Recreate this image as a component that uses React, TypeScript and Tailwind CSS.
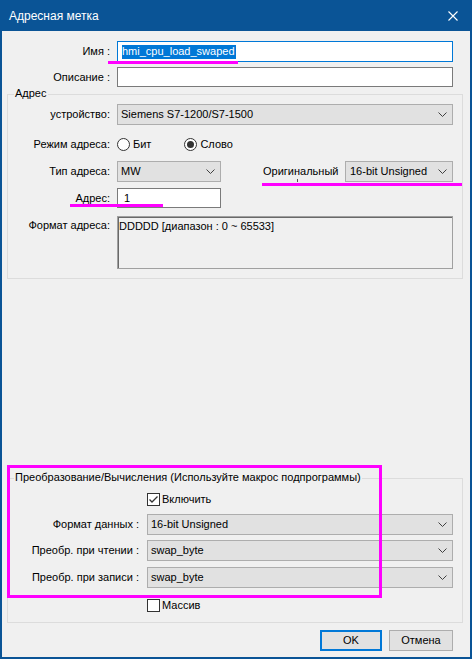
import React from 'react'

const Chevron: React.FC = () => (
    <svg width="9" height="5" viewBox="0 0 9 5" className="shrink-0"><polyline points="0.5,0.5 4.5,4.5 8.5,0.5" fill="none" stroke="#404040" strokeWidth="1" /></svg>
)

const Select: React.FC<{ value: string; w: string; pl?: string }> = ({ value, w, pl = 'pl-[3px]' }) => (
    <div className={`${w} h-[21px] flex items-center justify-between bg-[#e1e1e1] border border-[#adadad] ${pl} pr-[5px]`}>
        <span>{value}</span>
        <Chevron />
    </div>
)

const Radio: React.FC<{ checked?: boolean }> = ({ checked }) => (
    <div className="w-[13px] h-[13px] rounded-full border border-[#333] bg-white flex items-center justify-center shrink-0">
        {checked && <div className="w-[7px] h-[7px] rounded-full bg-[#333]" />}
    </div>
)

const Check: React.FC<{ checked?: boolean }> = ({ checked }) => (
    <div className="w-[13px] h-[13px] border border-[#333] bg-white flex items-center justify-center shrink-0">
        {checked && <svg width="11" height="11" viewBox="0 0 11 11"><polyline points="1.5,5.5 4,8 9.5,2.5" fill="none" stroke="#333" strokeWidth="1.3" /></svg>}
    </div>
)

const App: React.FC = () => {
    const lbl = "text-right shrink-0"
    return (
        <div className="w-[472px] h-[659px] bg-[#f0f0f0] border-x-2 border-b-2 border-[#0a5496] relative flex flex-col text-[11px] text-black leading-none font-['Liberation_Sans',Arial,sans-serif]">
            {/* title bar */}
            <div className="h-[31px] shrink-0 bg-[#0a5496] flex items-center justify-between pl-[7px] pr-[12px] text-white text-[12px]">
                <span>Адресная метка</span>
                <svg width="10" height="10" viewBox="0 0 10 10"><path d="M0.5 0.5 L9.5 9.5 M9.5 0.5 L0.5 9.5" stroke="#fff" strokeWidth="1.1" /></svg>
            </div>

            <div className="flex items-center mt-[10px]">
                <span className={`${lbl} w-[108px]`}>Имя :</span>
                <div className="ml-[7px] w-[336px] h-[21px] bg-white border border-[#0078d7] flex items-center pl-[4px]">
                    <span className="bg-[#0078d7] text-white h-[14px] flex items-center pr-[1px]">hmi_cpu_load_swaped</span>
                </div>
            </div>
            <div className="flex items-center mt-[5px]">
                <span className={`${lbl} w-[108px]`}>Описание :</span>
                <div className="ml-[7px] w-[336px] h-[20px] bg-white border border-[#7a7a7a]" />
            </div>

            {/* Адрес group */}
            <div className="relative mt-[7px] ml-[5px] w-[456px] border border-[#dcdcdc] pt-[9px] pb-[9px]">
                <span className="absolute -top-[7px] left-[6px] px-[1px] bg-[#f0f0f0]">Адрес</span>
                <div className="flex items-center">
                    <span className={`${lbl} w-[102px]`}>устройство:</span>
                    <div className="ml-[7px]"><Select value="Siemens S7-1200/S7-1500" w="w-[336px]" /></div>
                </div>
                <div className="flex items-center mt-[9px] h-[20px]">
                    <span className={`${lbl} w-[102px]`}>Режим адреса:</span>
                    <div className="ml-[7px] flex items-center gap-[3px]"><Radio /><span>Бит</span></div>
                    <div className="ml-[33px] flex items-center gap-[3px]"><Radio checked /><span>Слово</span></div>
                </div>
                <div className="flex items-center mt-[7px]">
                    <span className={`${lbl} w-[102px]`}>Тип адреса:</span>
                    <div className="ml-[7px]"><Select value="MW" w="w-[104px]" /></div>
                    <span className="ml-[42px] w-[82px]">Оригинальный</span>
                    <Select value="16-bit Unsigned" w="w-[108px]" pl="pl-[4px]" />
                </div>
                <div className="flex items-center mt-[6px]">
                    <span className={`${lbl} w-[102px]`}>Адрес:</span>
                    <div className="ml-[7px] w-[104px] h-[20px] bg-white border border-[#7a7a7a] flex items-center pl-[6px]">1</div>
                </div>
                <div className="flex items-start mt-[8px]">
                    <span className={`${lbl} w-[102px] pt-[4px]`}>Формат адреса:</span>
                    <div className="ml-[7px] w-[336px] h-[53px] border border-[#a0a0a0] shadow-[inset_1px_1px_0_#696969] pl-[1px] pt-[4px]">DDDDD [диапазон : 0 ~ 65533]</div>
                </div>
            </div>

            {/* conversion group */}
            <div className="relative mt-[199px] ml-[5px] w-[456px] border border-[#dcdcdc] pt-[12px] pb-[9px]">
                <span className="absolute -top-[7px] left-[6px] px-[1px] bg-[#f0f0f0]">Преобразование/Вычисления (Используйте макрос подпрограммы)</span>
                <div className="flex items-center h-[16px] pl-[139px] gap-[2px]"><Check checked /><span>Включить</span></div>
                <div className="flex items-center mt-[7px]">
                    <span className={`${lbl} w-[131px]`}>Формат данных :</span>
                    <div className="ml-[8px]"><Select value="16-bit Unsigned" w="w-[306px]" /></div>
                </div>
                <div className="flex items-center mt-[5px]">
                    <span className={`${lbl} w-[131px]`}>Преобр. при чтении :</span>
                    <div className="ml-[8px]"><Select value="swap_byte" w="w-[306px]" /></div>
                </div>
                <div className="flex items-center mt-[6px]">
                    <span className={`${lbl} w-[131px]`}>Преобр. при записи :</span>
                    <div className="ml-[8px]"><Select value="swap_byte" w="w-[306px]" /></div>
                </div>
                <div className="flex items-center h-[16px] mt-[9px] pl-[139px] gap-[2px]"><Check /><span>Массив</span></div>
            </div>

            <div className="flex justify-end gap-[7px] mt-[7px] pr-[17px]">
                <div className="w-[62px] h-[21px] bg-[#e1e1e1] border-2 border-[#0078d7] flex items-center justify-center">OK</div>
                <div className="w-[64px] h-[21px] bg-[#e1e1e1] border border-[#adadad] flex items-center justify-center">Отмена</div>
            </div>

            {/* magenta annotations */}
            <div className="absolute left-[106px] top-[61px] w-[130px] h-[3px] bg-[#ff00ff]" />
            <div className="absolute left-[260px] top-[183px] w-[200px] h-[3px] bg-[#ff00ff]" />
            <div className="absolute left-[295px] top-[179px] w-[1px] h-[3px] bg-[#555]" />
            <div className="absolute left-[68px] top-[204px] w-[93px] h-[3px] bg-[#ff00ff]" />
            <div className="absolute left-[5px] top-[465px] w-[375px] h-[133px] border-[3px] border-[#ff00ff]" />
        </div>
    )
}

export default App
